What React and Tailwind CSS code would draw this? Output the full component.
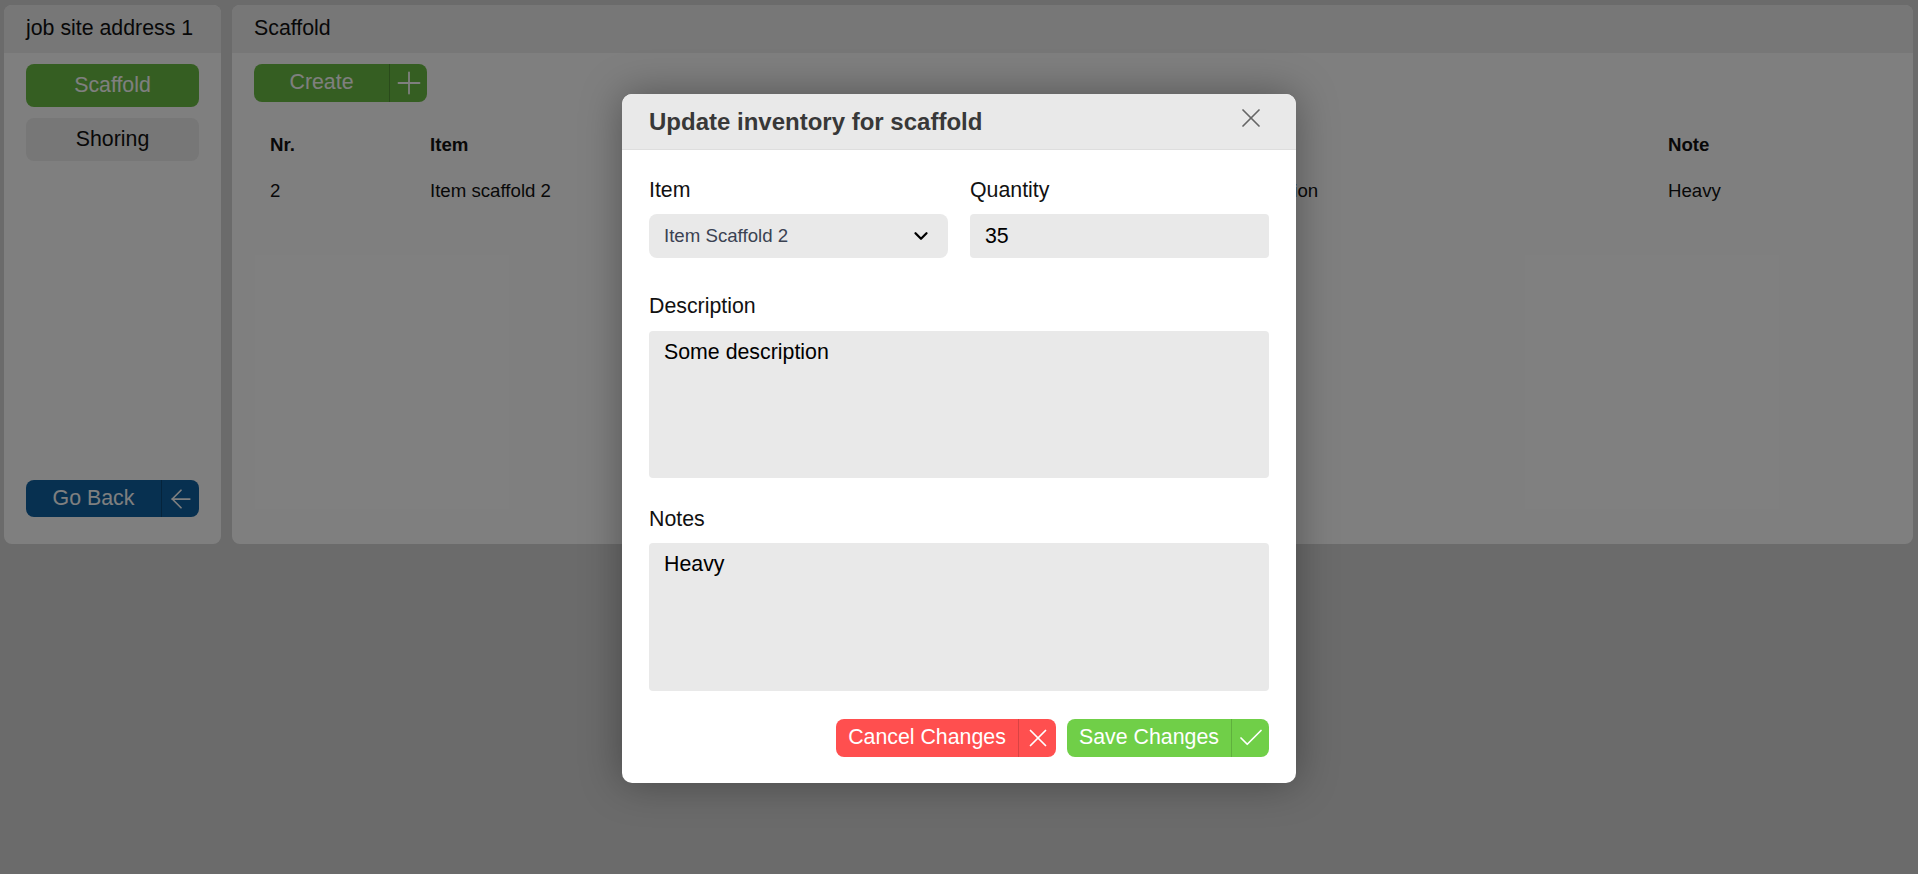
import React from "react";
import { X, Plus, Check, ChevronDown, ArrowLeft } from "lucide-react";

const rows = [
  { nr: 2, item: "Item scaffold 2", quantity: 35, description: "Some description", note: "Heavy" },
];

const SplitButton = ({ label, icon, className, divider }) => (
  <button className={`flex h-full items-stretch rounded-[8px] text-white ${className}`}>
    <span className="flex flex-1 items-center justify-center px-[11px]">{label}</span>
    <span className={`flex w-[38px] items-center justify-center border-l ${divider}`}>{icon}</span>
  </button>
);

const App = () => {
  return (
    <div className="relative h-[874px] w-full overflow-hidden bg-[#d6d6d6] font-['Liberation_Sans',Arial,sans-serif] text-[21.33px] text-[#111]">
      <div className="flex gap-[11px] pl-[4px] pr-[5px] pt-[5px]">
        <aside className="flex h-[539px] w-[217px] flex-col overflow-hidden rounded-[8px] bg-white">
          <div className="flex h-[48px] items-center bg-[#eeeeee] px-[22px]">job site address 1</div>
          <div className="flex flex-1 flex-col justify-between px-[22px] pb-[27px] pt-[11px]">
            <div className="flex flex-col gap-[11px]">
              <button className="h-[43px] rounded-[8px] bg-[#6bbd45] text-white">Scaffold</button>
              <button className="h-[43px] rounded-[8px] bg-[#eeeeee] text-[#111]">Shoring</button>
            </div>
            <div className="h-[37px]">
              <SplitButton
                label="Go Back"
                icon={<ArrowLeft size={30} strokeWidth={1.4} />}
                className="w-full bg-[#0e60a0]"
                divider="border-black/25"
              />
            </div>
          </div>
        </aside>

        <main className="h-[539px] flex-1 overflow-hidden rounded-[8px] bg-white">
          <div className="flex h-[48px] items-center bg-[#eeeeee] px-[22px]">Scaffold</div>
          <div className="px-[22px] pt-[11px]">
            <div className="h-[38px] w-[173px]">
              <SplitButton
                label="Create"
                icon={<Plus size={36} strokeWidth={1.2} />}
                className="w-full bg-[#6bbd45]"
                divider="border-black/20"
              />
            </div>
            <table className="mt-[20px] table-fixed border-collapse text-left text-[18.67px]">
              <thead>
                <tr className="h-[46px]">
                  <th className="w-[160px] px-4 font-bold">Nr.</th>
                  <th className="w-[370px] px-4 font-bold">Item</th>
                  <th className="w-[374px] px-4 font-bold">Quantity</th>
                  <th className="w-[494px] px-4 font-bold">Description</th>
                  <th className="w-[239px] px-4 font-bold">Note</th>
                </tr>
              </thead>
              <tbody>
                {rows.map((r) => (
                  <tr key={r.nr} className="h-[46px]">
                    <td className="px-4">{r.nr}</td>
                    <td className="px-4">{r.item}</td>
                    <td className="px-4">{r.quantity}</td>
                    <td className="px-4">{r.description}</td>
                    <td className="px-4">{r.note}</td>
                  </tr>
                ))}
              </tbody>
            </table>
          </div>
        </main>
      </div>

      <div className="absolute inset-0 flex items-start justify-center bg-black/50 pt-[94px]">
        <div className="w-[674px] overflow-hidden rounded-[10px] bg-white shadow-[0_0_40px_rgba(0,0,0,0.35)]">
          <div className="flex h-[56px] items-center justify-between border-b border-[#dedede] bg-[#e9e9e9] pl-[27px] pr-[29px]">
            <h2 className="text-[24px] font-bold text-[#383838]">Update inventory for scaffold</h2>
            <X size={32} strokeWidth={1.3} className="-mt-[8px] text-[#666]" />
          </div>
          <div className="px-[27px] pb-[26px] pt-[28px]">
            <div className="grid grid-cols-2 gap-x-[22px]">
              <div>
                <label className="mb-[12px] block leading-[24px]">Item</label>
                <div className="relative">
                  <select
                    defaultValue="2"
                    className="h-[44px] w-full appearance-none rounded-[8px] bg-[#e9e9e9] px-[15px] text-[18.67px] text-[#3b4252] outline-none"
                  >
                    <option value="2">Item Scaffold 2</option>
                  </select>
                  <ChevronDown size={22} strokeWidth={2.5} className="pointer-events-none absolute right-[16px] top-[11px] text-black" />
                </div>
              </div>
              <div>
                <label className="mb-[12px] block leading-[24px]">Quantity</label>
                <input
                  defaultValue="35"
                  className="h-[44px] w-full rounded-[4px] bg-[#e9e9e9] px-[15px] text-black outline-none"
                />
              </div>
            </div>

            <label className="mb-[13px] mt-[36px] block leading-[24px]">Description</label>
            <textarea
              defaultValue="Some description"
              className="block h-[147px] w-full resize-none rounded-[4px] bg-[#e9e9e9] px-[15px] pt-[9px] leading-[24px] text-black outline-none"
            />

            <label className="mb-[12px] mt-[29px] block leading-[24px]">Notes</label>
            <textarea
              defaultValue="Heavy"
              className="block h-[148px] w-full resize-none rounded-[4px] bg-[#e9e9e9] px-[15px] pt-[9px] leading-[24px] text-black outline-none"
            />

            <div className="mt-[28px] flex h-[38px] justify-end gap-[11px]">
              <SplitButton
                label="Cancel Changes"
                icon={<X size={30} strokeWidth={1.4} />}
                className="w-[220px] bg-[#ff4f4f]"
                divider="border-black/15"
              />
              <SplitButton
                label="Save Changes"
                icon={<Check size={30} strokeWidth={1.4} />}
                className="w-[202px] bg-[#70cf48]"
                divider="border-black/15"
              />
            </div>
          </div>
        </div>
      </div>
    </div>
  );
};

export default App;
